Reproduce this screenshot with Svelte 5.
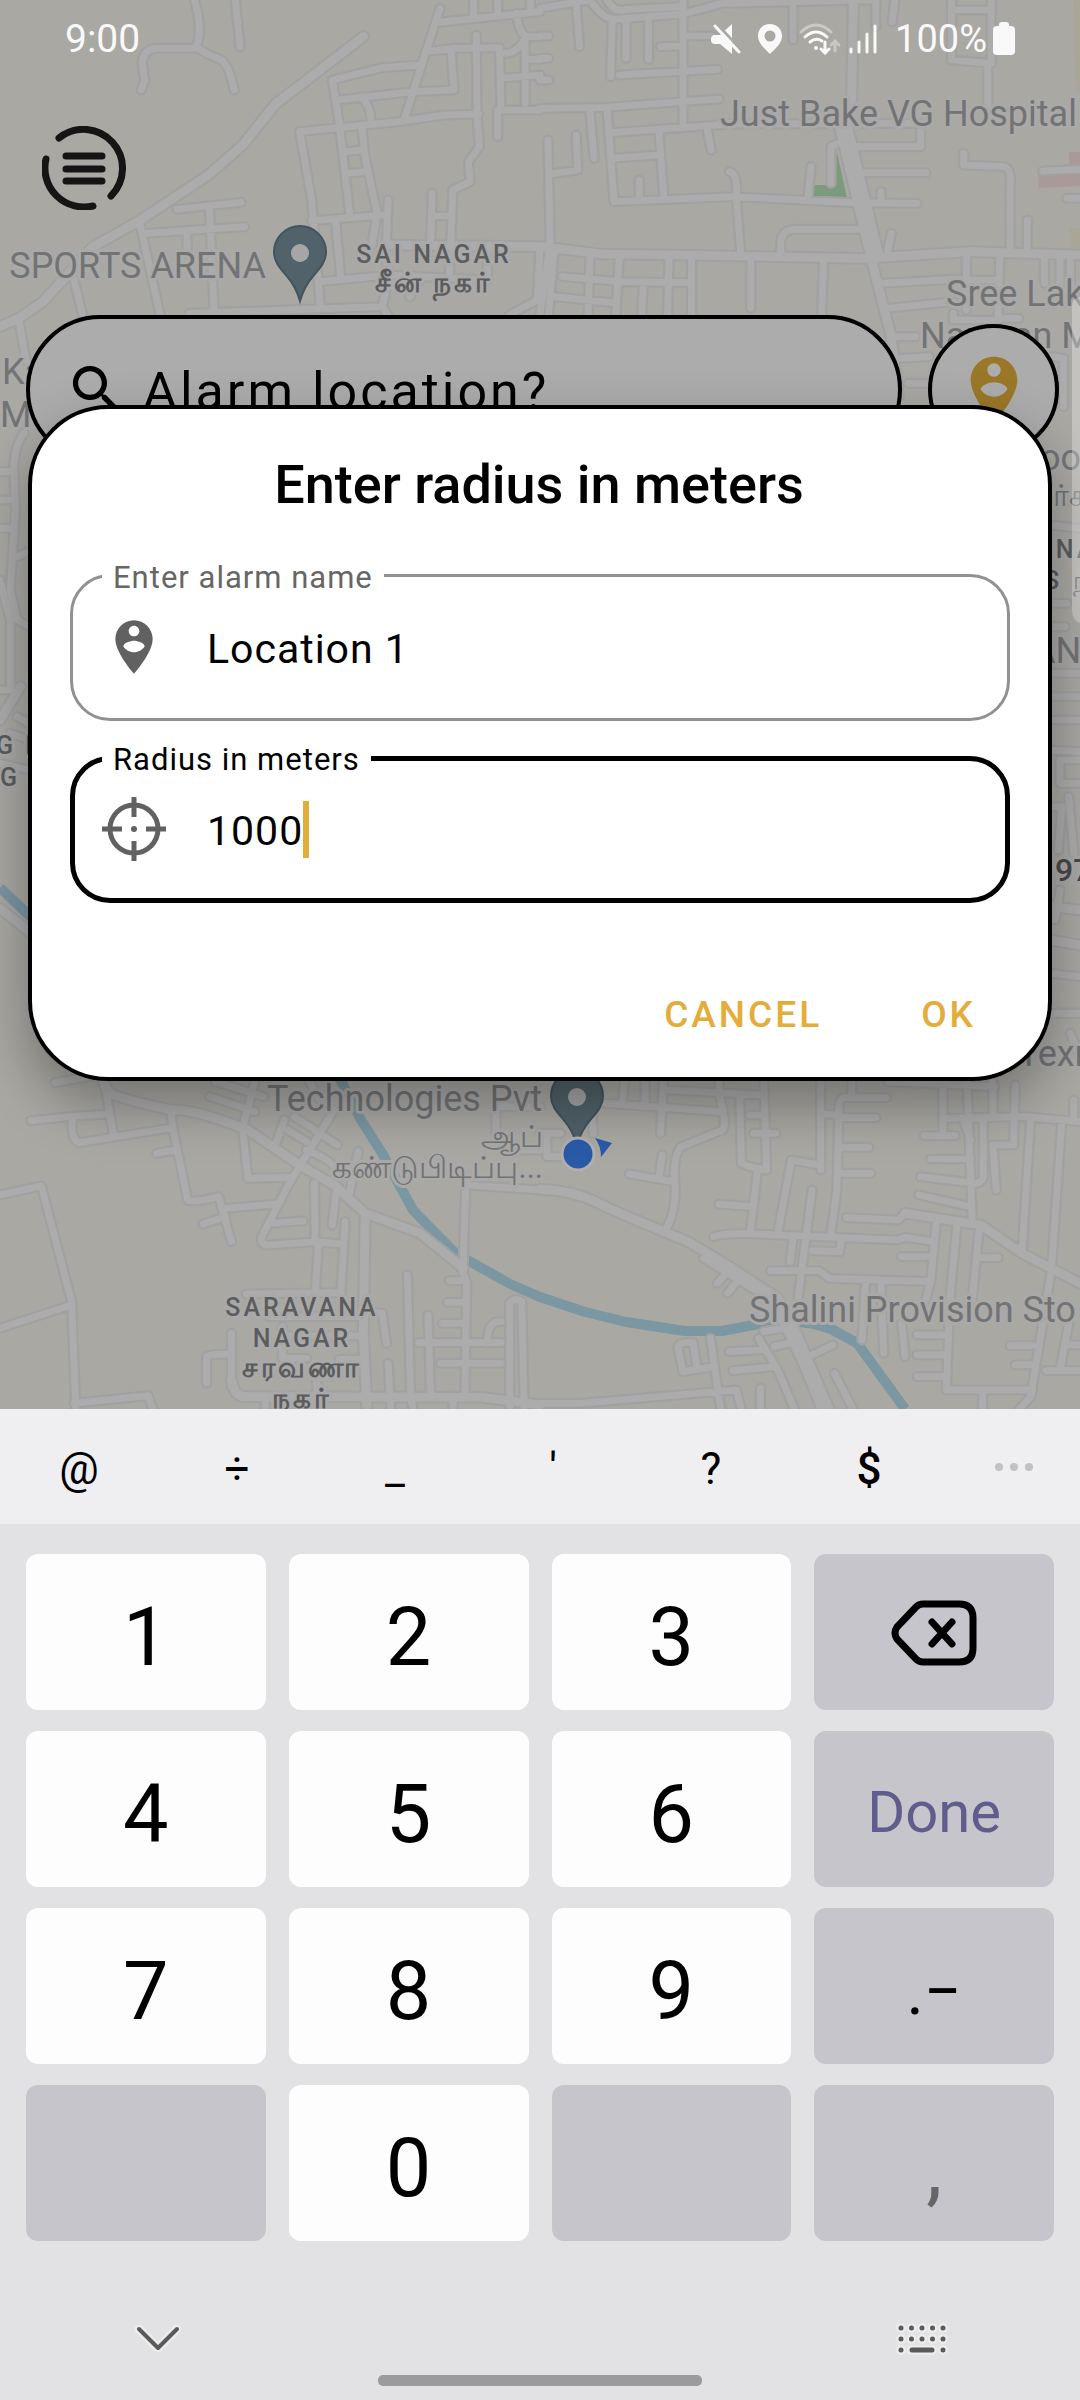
<script lang="ts">
  type Tile = { at: string; main: string; lanes: string };

  // Street geometry, one tile per quadrant of the visible map.
  const tiles: Tile[] = [
    {
      at: 'translate(0 0) scale(.3444 .3333)',
      main: 'M1055 110L800 312 705 435 605 525 405 662 270 740 125 905 55 955 0 980M1122 735L1568 740',
      lanes:
        'M565 0Q590 90 570 140Q590 160 640 178Q665 195 680 270M570 145H450Q415 150 413 190L420 240 410 270M683 0L697 140M55 960L75 1080M405 665L465 945M215 840L240 945M425 700L710 680M515 628L700 607M608 620L622 945M543 700V760M1278 25L1235 160 1175 355M1265 68L1568 35M1375 0V55M1445 0V40M1540 0V30M1235 155L1320 145 1450 143 1455 330H1568M1310 150L1318 270 1200 275 980 300M1220 195L1110 203 965 240 985 370 1015 640M1047 290Q1080 320 1077 370M870 395L1160 365 1290 345 1390 342M870 395L905 600 930 920M1383 105L1385 345 1392 440 1360 485 1365 545 1315 570 1305 830M1050 375L1060 470 1095 640 1080 735M1005 455L1050 450M1010 520L1060 515M905 662L1120 645M1127 600L1122 735M1255 580L1250 735M1255 648H1310M1500 40Q1505 90 1525 110H1568M1525 110V310M1525 115Q1500 165 1455 160M1455 235L1568 225M1525 178H1568M1445 330V410M975 665L990 840M930 845L1130 825 1415 840M1115 750L1130 830 1110 920M550 940L1110 920 1125 945M1415 750V830M1568 740L1560 900 1480 945M1190 890L1220 840'
    },
    {
      at: 'translate(540 0) scale(.3444 .3333)',
      main: 'M0 740L180 762 400 765 940 775 1250 755 1568 765M910 0L905 300 870 380 960 770 1020 1010 1040 1190M895 390L985 770',
      lanes:
        'M0 25L145 0Q180 55 215 58L415 42 530 10 960 0M195 0Q215 40 250 28L410 20M105 10L115 140M210 60L205 230M250 65V175M315 65V178M230 225L515 208M415 0V380M415 108H500M350 140L410 138M0 325L190 322 520 297M0 108H25M0 175H25M0 240H25M735 10V120M975 0V80M1030 0L1023 65M195 330L215 605 560 590 905 608 1095 610M145 335L157 475M210 398L555 372 1100 370M345 390L360 600M205 475L345 465M485 385L497 450M288 540V595M23 420L30 740M105 405L110 510 30 522M550 515Q575 520 570 590L582 750M787 500L778 595M845 550V440L880 425M900 440H1105V395M915 518H1120M990 575V610M1230 460V495L1350 500Q1370 510 1365 560V750M1020 700L1010 750M700 755Q690 690 740 688H940M1415 660V750M1195 0V180L1310 190V0M1195 30H1310M1300 190V320M25 760L0 945M40 760L25 945M145 770L140 945M230 775L220 945M375 780L370 945M440 780V945M65 830L230 845 440 848M40 890L210 908M300 855L295 945M612 785V925M823 785L818 940M990 850L1200 838 1330 840M1010 925L1200 905M1238 770V930M1335 770L1330 955H1390M1200 940V960H1330M1465 770V850M1510 770V870M1540 770V860M1050 1075L1130 1070M1070 1150H1130M1030 1010H1090M1460 513L1568 508M1530 595H1568M1490 1070L1520 1075 1520 1220'
    },
    {
      at: 'translate(0 400) scale(.3444 .3333)',
      main: 'M0 960L60 860M0 1525L90 1600',
      lanes:
        'M70 100Q45 130 40 200L45 330 30 570 50 660M0 215H25M0 300H25M0 385H25M50 470L85 455M50 660L85 680M0 540L30 660V870M0 870H30M50 950L85 970M30 1000L85 1020M0 1090L85 1110'
    },
    {
      at: 'translate(540 400) scale(.3444 .3333)',
      main: 'M1480 1520L1568 1530M1480 1620L1568 1635',
      lanes:
        'M1480 375L1568 385M1480 610H1530M1480 680H1525M1480 820H1568M1480 890H1568M1480 960H1568M1480 1050L1568 1055M1568 1080H1510V1150H1568M1480 1220H1515L1505 1350M1535 1190L1550 1360M1510 1470L1495 1560M1480 1720L1568 1730M1480 1840H1568'
    },
    {
      at: 'translate(0 900) scale(.3444 .3333)',
      main: 'M300 530Q300 570 330 585Q400 610 500 630Q560 625 720 690L870 795 970 855 1060 940 1220 1000 1345 1105M672 1440Q680 1490 710 1490L1400 1492 1568 1515M1060 950L1055 1300 1065 1520',
      lanes:
        'M160 548L310 520M1340 1105L1355 1150 1350 1480M305 560L330 705M90 662L220 648 320 642M210 660Q205 720 230 728L490 685M495 635L505 700 545 900Q550 910 635 890L672 1025M455 760L510 750M660 925L800 912M590 972L655 950M705 690L720 835 850 832M705 680L740 545M610 590L740 635M625 545L765 590M825 660L800 735M970 630L840 850 760 1010Q755 1035 780 1035L920 1025 990 1032M835 690L890 725M855 650L980 735M785 970L880 963M890 750Q960 780 970 800M1040 755L1015 880M913 850L915 1025M975 880L965 975M1002 965L990 1180M925 1030L915 1180M715 1182L990 1178M1353 840L1345 1090M1355 855L1568 870M1183 1125L1192 1480M1305 1142H1350M1300 1207H1350M1285 1270H1350M1215 1328H1455M1243 1245L1250 1480M1455 1265Q1415 1260 1415 1330M1280 1390H1455M1480 1520V1210Q1495 1190 1515 1205L1522 1520M672 1300V1460M600 1450V1370Q605 1362 670 1362M1060 1235L1110 1240 1122 1330M780 1250H1060M820 1280V1375H890M830 1308H1050M985 1378H1060M1127 1390L1135 1530M0 885L120 858 208 1205 220 1530M0 1285L208 1215M215 1510L430 1487 445 1530M1190 1480L1200 1530M1315 1490V1530M920 1430V1490M770 1490V1530M1440 700V620H1568M900 545Q920 590 930 600M1460 750H1568'
    },
    {
      at: 'translate(540 900) scale(.3444 .3333)',
      main: 'M0 868Q90 870 160 905Q230 940 290 965L430 1025 550 1100 690 1195M690 1195L740 1290 840 1530M1060 940L1280 975 1400 1060 1568 1150M700 1250L765 1390 820 1530',
      lanes:
        'M370 980Q400 920 390 830Q390 760 410 740L530 690Q545 680 520 580V545M190 610L530 635M358 545L350 700M260 822L385 845M355 765L345 835M245 545L240 605M305 545V615M370 570L650 585M650 545L658 810Q600 800 585 790L580 590M610 645H650M620 700H685M632 810L610 1000M520 913L620 920M815 545V810M690 1000L730 780 810 795M790 870L750 1190M1005 593H880Q865 600 868 640L862 870 845 1000M825 642L870 645M870 653H975M870 742H955M870 820H960M905 545V590M505 1010Q550 995 690 1005L1040 1020 1060 1012 1140 1025M890 953L1040 960 1060 940M670 1112H810L840 1135 1135 1145M735 1010L727 1085M790 1052L870 1055 875 1020M1150 970L1135 1140 1120 1200M1210 980L1190 1200 1180 1470H1430M1275 990L1255 1200M1280 1073H1330M1050 1070H1130M1240 545L1255 960M1010 545L1320 560M1170 560V700M1115 707H1205M1170 655L1410 650 1568 665M1230 660L1250 720M1135 777H1250M1105 830L1260 850Q1290 850 1287 820V655M1100 885L1250 920M1380 555L1375 735H1315L1325 870M1315 545V650M1425 655L1400 1050M1515 665L1485 1110 1425 1490 1390 1530M1550 600V650M1535 1270L1510 1410M1470 1412H1568M1365 1337H1430M1380 1395H1430M1535 1335H1568M1095 1305H1170M1095 1365H1170M1095 1430H1170M1285 1475V1530M945 1145L935 1320M990 1155L998 1360M1050 1270L1060 1370M550 1355L640 1350M560 1412L680 1400M635 1315L690 1410 740 1530M495 1315L525 1530M505 1400L415 1415 400 1340Q405 1325 445 1328L455 1400M650 1295L730 1280M680 1340L745 1325M850 1335L790 1365M855 1420L910 1530M640 1465V1530M0 1510H120L570 1470 585 1530M475 1075L640 1180M545 1115L515 1150M575 1140L545 1180M20 700V770H60M150 640L155 700M1540 400L1568 470M1480 340H1568M0 700H60'
    }
  ];

  const symbols = ['@', '÷', '_', "'", '?', '$'];

  const keys = [
    { label: '1' }, { label: '2' }, { label: '3' }, { label: 'Backspace', kind: 'erase' },
    { label: '4' }, { label: '5' }, { label: '6' }, { label: 'Done', kind: 'done' },
    { label: '7' }, { label: '8' }, { label: '9' }, { label: '.−', kind: 'marks' },
    { label: '', kind: 'blank' }, { label: '0' }, { label: '', kind: 'blank' }, { label: ',', kind: 'comma' }
  ];

  const personPin =
    'M12 2C8.14 2 5 5.14 5 9c0 5.25 7 13 7 13s7-7.75 7-13c0-3.86-3.14-7-7-7zm0 2c1.1 0 2 .9 2 2s-.9 2-2 2-2-.9-2-2 .9-2 2-2zm0 10c-1.67 0-3.14-.85-4-2.15.02-1.32 2.67-2.15 4-2.15s3.98.83 4 2.15C15.14 13.15 13.67 14 12 14z';

  let alarmName = $state('Location 1');
  let radius = $state('1000');
</script>

<div class="screen">
  <main class="stage">
    <svg class="map" viewBox="0 0 1080 1409" preserveAspectRatio="xMidYMin slice" aria-hidden="true">
      <path class="park" d="M814 197V185H828L837 152 847 198Z" />
      <path class="clinic" d="M1038 172L1080 166V186L1039 188ZM1069 152H1080V166H1069Z" />
      <path class="yard" d="M1073 0H1080V90H1076ZM1070 228H1080V248H1070Z" />
      <g class="water">
        <path d="M0 888L32 918M338 1075L361 1120 382 1153 413 1210 455 1253 510 1284 540 1297 585 1312 626 1322 685 1331 722 1331 764 1323Q805 1318 833 1330L857 1343 905 1409" />
      </g>
      {#each tiles as tile}
        <g transform={tile.at}>
          <path class="main casing" d={tile.main} />
          <path class="lane casing" d={tile.lanes} />
        </g>
      {/each}
      {#each tiles as tile}
        <g transform={tile.at}>
          <path class="main" d={tile.main} />
          <path class="lane" d={tile.lanes} />
        </g>
      {/each}

      <g class="place">
        <text x="720" y="126">Just Bake VG Hospital</text>
        <text x="266" y="278" text-anchor="end">R SPORTS ARENA</text>
        <text x="946" y="306">Sree Lak</text>
        <text x="920" y="348">Narayan M</text>
        <text x="2" y="384">Ka</text>
        <text x="0" y="427">Ma</text>
        <text x="1040" y="470">oor</text>
        <text x="1053" y="506" class="tamil">ர்க</text>
        <text x="1032" y="663">ANT</text>
        <text x="1018" y="1066">Texm</text>
        <text x="267" y="1111">Technologies Pvt</text>
        <text x="543" y="1147" text-anchor="end" class="tamil">ஆப்</text>
        <text x="543" y="1178" text-anchor="end" class="tamil">கண்டுபிடிப்பு...</text>
        <text x="749" y="1322">Shalini Provision Sto</text>
      </g>
      <g class="area">
        <text x="434" y="263">SAI NAGAR</text>
        <text x="434" y="292" class="tamil">சீன் நகர்</text>
        <text x="20" y="754">G R</text>
        <text x="10" y="786">G</text>
        <text x="1076" y="558">NA</text>
        <text x="1053" y="589">S</text>
        <text x="1082" y="589">ந</text>
        <text x="302" y="1316">SARAVANA</text>
        <text x="302" y="1347">NAGAR</text>
        <text x="302" y="1377" class="tamil">சரவணா</text>
        <text x="302" y="1408" class="tamil">நகர்</text>
      </g>
      <text class="route" x="1055" y="881">97</text>

      <path class="marker" d="M300 301C297 290 293 283 286 275 279 267 274 261 274 252A26 26 0 0 1 326 252C326 261 321 267 314 275 307 283 303 290 300 301Z" />
      <circle class="hole" cx="300" cy="253" r="9" />
      <path class="marker" d="M577 1145C574 1134 570 1127 563 1119 556 1111 551 1105 551 1096A26 26 0 0 1 603 1096C603 1105 598 1111 591 1119 584 1127 580 1134 577 1145Z" />
      <circle class="hole" cx="577" cy="1097" r="9" />
      <path class="heading" d="M595 1138L612 1143 601 1157Q601 1146 595 1138Z" />
      <circle class="here" cx="578" cy="1154" r="16" />
      <path class="edge" d="M1080 297Q1072 298 1072 306V610Q1072 620 1080 623Z" />
    </svg>

    <header class="top">
      <div class="status">
        <time>9:00</time>
        <div class="signals">
          <svg width="30" height="32" viewBox="0 0 30 32" fill="#f9f9f9" aria-hidden="true">
            <path d="M0 16Q0 12 4 12H9L21 1V31L9 21H4Q0 21 0 17Z" />
            <path d="M5 0L31 28" stroke="#a9a8a4" stroke-width="3" />
            <path d="M4 3L28 29" stroke="#f9f9f9" stroke-width="3" stroke-linecap="round" />
          </svg>
          <svg width="26" height="32" viewBox="0 0 26 32" fill="#f9f9f9" fill-rule="evenodd" aria-hidden="true">
            <path d="M13 1C6 1 1 6 1 13 1 20 7 25 13 31 19 25 25 20 25 13 25 6 20 1 13 1ZM13 7.500A5.500 5.500 0 1 1 13 18.500 5.500 5.500 0 1 1 13 7.500Z" />
          </svg>
          <svg width="80" height="32" viewBox="0 0 80 32" fill="none" stroke="#f9f9f9" stroke-width="3" stroke-linecap="round" aria-hidden="true">
            <path d="M2 9Q17-5 32 9" stroke="#c8c8c7" />
            <path d="M6 14Q17 4 28 14M11 19Q17 14 23 18" />
            <circle cx="17" cy="25" r="2" fill="#f9f9f9" stroke="none" />
            <path d="M26 19V29M22 26L26 30 30 26" stroke-width="3" />
            <path d="M36 28V19M32 22L36 18 40 22" stroke="#c8c8c7" stroke-width="3" />
            <path d="M52 26V29M60 19V29M68 11V29M76 3V29" />
          </svg>
          <span class="percent">100%</span>
          <svg width="22" height="34" viewBox="0 0 22 34" fill="#f9f9f9" aria-hidden="true">
            <path d="M6 4V3Q6 0 9 0H13Q16 0 16 3V4H18Q22 4 22 8V29Q22 33 18 33H4Q0 33 0 29V8Q0 4 4 4Z" />
          </svg>
        </div>
      </div>

      <button class="menu" aria-label="Menu">
        <svg viewBox="-42 -42 84 84" fill="none" stroke="#151515" stroke-width="7" stroke-linecap="round">
          <path d="M-25-30A39 39 0 0 1 27 28M9 38A39 39 0 0 1-38-9M-18-12H18M-18 1H18M-18 13H18" />
        </svg>
      </button>

      <div class="find">
        <label class="search">
          <svg viewBox="0 0 24 24" aria-hidden="true">
            <path d="M15.500 14h-.79l-.28-.27A6.470 6.470 0 0 0 16 9.500 6.500 6.500 0 1 0 9.500 16c1.610 0 3.090-.59 4.230-1.570l.27.28v.79l5 4.990L20.490 19l-4.990-5zm-6 0C7.010 14 5 11.990 5 9.500S7.010 5 9.500 5 14 7.010 14 9.500 11.990 14 9.500 14z" />
          </svg>
          <input type="text" placeholder="Alarm location?" aria-label="Alarm location" />
        </label>
        <button class="locate" aria-label="My location">
          <svg viewBox="0 0 24 24" aria-hidden="true"><path d={personPin} /></svg>
        </button>
      </div>
    </header>

    <div class="overlay">
      <form class="dialog" role="dialog" aria-labelledby="dialog-title" onsubmit={(e) => e.preventDefault()}>
        <h1 id="dialog-title">Enter radius in meters</h1>
        <div class="fields">
          <div class="field">
            <label for="alarm-name">Enter alarm name</label>
            <svg viewBox="0 0 24 24" aria-hidden="true"><path d={personPin} /></svg>
            <input id="alarm-name" type="text" bind:value={alarmName} />
          </div>
          <div class="field active">
            <label for="radius">Radius in meters</label>
            <svg viewBox="-32 -32 64 64" aria-hidden="true">
              <circle r="24" fill="none" stroke="#616161" stroke-width="5" />
              <path d="M-32 0H-12M12 0H32M0-32V-12M0 12V32" stroke="#616161" stroke-width="5" />
              <circle r="3" />
            </svg>
            <input id="radius" type="text" inputmode="numeric" bind:value={radius} />
            <span class="caret"></span>
          </div>
        </div>
        <div class="actions">
          <button type="button">CANCEL</button>
          <button type="submit">OK</button>
        </div>
      </form>
    </div>
  </main>

  <section class="keyboard" aria-label="Keyboard">
    <div class="symbols">
      {#each symbols as symbol}
        <button class={['symbol', symbol === '$' && 'strong']}>{symbol}</button>
      {/each}
      <button class="more" aria-label="More symbols"><i></i><i></i><i></i></button>
    </div>
    <div class="keys">
      {#each keys as key}
        <button class={['key', key.kind]} aria-label={key.label || 'Blank'}>
          {#if key.kind === 'erase'}
            <svg width="86" height="66" viewBox="0 0 86 66" fill="none" stroke="#000" stroke-width="7" stroke-linecap="round" aria-hidden="true">
              <path d="M32 4H68Q82 4 82 18V48Q82 62 68 62H32Q28 62 25 59L6 39Q2 33 6 27L25 7Q28 4 32 4ZM41 22L61 44M61 22L41 44" />
            </svg>
          {:else}
            {key.label}
          {/if}
        </button>
      {/each}
    </div>
    <nav class="nav">
      <div class="navrow">
        <button aria-label="Hide keyboard">
          <svg width="52" height="32" viewBox="0 0 52 32" fill="none" stroke-linecap="round" stroke-linejoin="round">
            <path d="M7 6L26 25 45 6" stroke="#ececec" stroke-width="9" />
            <path d="M7 6L26 25 45 6" stroke="#5a5a5a" stroke-width="4" />
          </svg>
        </button>
        <button aria-label="Switch keyboard">
          <svg width="52" height="32" viewBox="0 0 52 32" fill="none" stroke-linecap="round">
            <path stroke="#ececec" stroke-width="10" d="M5 5h0M15.500 5h0M26 5h0M36.500 5h0M47 5h0M5 16h0M15.500 16h0M26 16h0M36.500 16h0M47 16h0M5 27h0M16 27H36M47 27h0" />
            <path stroke="#5a5a5a" stroke-width="5" d="M5 5h0M15.500 5h0M26 5h0M36.500 5h0M47 5h0M5 16h0M15.500 16h0M26 16h0M36.500 16h0M47 16h0M5 27h0M16 27H36M47 27h0" />
          </svg>
        </button>
      </div>
      <div class="home"></div>
    </nav>
  </section>
</div>

<style>
  :global(body) {
    margin: 0;
    background: #e2e2e4;
  }
  * {
    box-sizing: border-box;
  }
  .screen {
    display: flex;
    flex-direction: column;
    min-height: 100vh;
    font-family: Roboto, 'Liberation Sans', sans-serif;
    color: #000;
  }
  button,
  input {
    font: inherit;
    color: inherit;
    border: 0;
    padding: 0;
    background: none;
  }
  svg {
    display: block;
    flex: none;
  }

  .stage {
    position: relative;
    flex: 1;
    overflow: hidden;
    background: #a9a8a3;
  }
  .map {
    position: absolute;
    inset: 0;
    width: 100%;
    height: 100%;
  }
  .park { fill: #7c9a7c; }
  .clinic { fill: #a99a99; }
  .yard { fill: #a9a697; }
  .water path {
    fill: none;
    stroke: #7a97a2;
    stroke-width: 10;
    stroke-linejoin: round;
  }
  .lane,
  .main {
    fill: none;
    stroke: #acacad;
    stroke-linecap: round;
    stroke-linejoin: round;
    stroke-width: 20;
  }
  .main { stroke-width: 26; }
  .lane.casing,
  .main.casing {
    stroke: #a1a1a1;
    stroke-width: 33;
  }
  .main.casing { stroke-width: 38; }
  .place text,
  .area text,
  .route {
    paint-order: stroke;
    stroke: #a9a9a9;
    stroke-width: 6;
    stroke-linejoin: round;
  }
  .place {
    font-size: 36px;
    fill: #737373;
  }
  .place .tamil { font-size: 31px; }
  .area {
    font-size: 25px;
    font-weight: 500;
    letter-spacing: 3px;
    text-anchor: middle;
    fill: #5c5c5c;
  }
  .area .tamil {
    font-size: 28px;
    font-weight: 600;
  }
  .route {
    font-size: 32px;
    font-weight: 500;
    fill: #484848;
  }
  .marker {
    fill: #51626a;
    stroke: #43545c;
    stroke-width: 2;
  }
  .hole { fill: #a6a6a6; }
  .heading { fill: #2a5aa8; }
  .here {
    fill: #2a5aa8;
    stroke: #b0b0b0;
    stroke-width: 3;
  }
  .edge { fill: rgba(255, 255, 255, 0.3); }

  .top { position: relative; }
  .status {
    display: flex;
    justify-content: space-between;
    align-items: center;
    height: 78px;
    padding: 0 65px;
    font-size: 39px;
  	color: #f9f9f9;
  }
  .signals {
    display: flex;
    align-items: center;
    gap: 16px;
  }
  .percent {
    margin-right: -10px;
    font-size: 38px;
  }
  .menu {
    display: block;
    width: 84px;
    height: 84px;
    margin: 48px 0 0 42px;
  }
  .find {
    display: flex;
    align-items: center;
    gap: 26px;
    margin-top: 105px;
    padding: 0 21px 0 26px;
  }
  .search {
    flex: 1;
    display: flex;
    align-items: center;
    gap: 15px;
    height: 149px;
    padding: 0 35px;
    border: 4px solid #000;
    border-radius: 75px;
    background: #acacac;
  }
  .search svg {
    width: 63px;
    height: 63px;
  }
  .search input {
    flex: 1;
    min-width: 0;
    padding-top: 4px;
    outline: 0;
    font-size: 52px;
    letter-spacing: 3px;
  }
  .search input::placeholder {
    color: #000;
    opacity: 1;
  }
  .locate {
    display: grid;
    place-items: center;
    width: 131px;
    height: 131px;
    border: 4px solid #000;
    border-radius: 50%;
    background: #acacac;
  }
  .locate svg {
    width: 80px;
    height: 80px;
    fill: #9a7828;
  }

  .overlay {
    position: absolute;
    inset: 0;
    display: flex;
    align-items: center;
    padding: 76px 28px 0;
  }
  .dialog {
    flex: 1;
    padding: 44px 40px 15px 38px;
    border: 4px solid #000;
    border-radius: 80px;
    background: #fff;
    box-shadow: 0 24px 56px rgba(0, 0, 0, 0.32);
  }
  h1 {
    margin: 0;
    font-size: 54px;
    line-height: 64px;
    font-weight: 500;
    text-align: center;
  }
  .fields {
    display: grid;
    gap: 35px;
    margin: 57px -2px 0 0;
  }
  .field {
    position: relative;
    display: flex;
    align-items: center;
    height: 147px;
    padding: 0 29px;
    border: 3px solid #919191;
    border-radius: 40px;
  }
  .field.active {
    padding: 0 27px;
    border: 5px solid #000;
  }
  .field label {
    position: absolute;
    top: -18px;
    left: 29px;
    padding: 0 11px;
    background: #fff;
    font-size: 31px;
    line-height: 38px;
    letter-spacing: 1px;
    color: #666;
  }
  .field.active label {
    top: -20px;
    left: 27px;
    color: #000;
  }
  .field svg {
    width: 64px;
    height: 64px;
    margin-right: 41px;
    fill: #616161;
  }
  .field input {
    flex: 1;
    min-width: 0;
    padding-top: 4px;
    outline: 0;
    font-size: 41px;
    letter-spacing: 1px;
  }
  .field.active input {
    flex: none;
    field-sizing: content;
  }
  .caret {
    width: 6px;
    height: 57px;
    background: #e2ad3b;
  }
  .actions {
    display: flex;
    justify-content: flex-end;
    gap: 35px;
    margin-top: 64px;
  }
  .actions button {
    height: 95px;
    padding: 0 32px;
    font-size: 37px;
    font-weight: 500;
    letter-spacing: 3px;
    color: #e2ad3b;
  }

  .symbols {
    display: flex;
    height: 115px;
    background: #efeff1;
  }
  .symbol {
    flex: 158;
    padding-top: 4px;
    font-size: 44px;
  }
  .strong { font-weight: 500; }
  .more {
    flex: 132;
    display: flex;
    justify-content: center;
    align-items: center;
    gap: 7px;
  }
  .more i {
    width: 8px;
    height: 8px;
    border-radius: 50%;
    background: #c2c2c4;
  }
  .keys {
    display: grid;
    grid-template-columns: repeat(4, 1fr);
    grid-auto-rows: 156px;
    gap: 21px 23px;
    padding: 30px 26px 0;
  }
  .key {
    display: grid;
    place-items: center;
    padding-top: 11px;
    border-radius: 12px;
    background: #fdfdfd;
    font-size: 81px;
    line-height: 96px;
  }
  .erase,
  .done,
  .marks,
  .blank,
  .comma {
    background: #c6c5cc;
  }
  .erase { padding-top: 2px; }
  .done {
    padding-top: 6px;
    font-size: 58px;
    color: #605c8b;
  }
  .marks { font-size: 66px; }
  .comma { color: #666; }
  .nav { padding: 82px 0 14px; }
  .navrow {
    display: flex;
    justify-content: space-between;
    padding: 0 132px;
  }
  .home {
    width: 30%;
    height: 11px;
    margin: 20px auto 0;
    border-radius: 5px;
    background: #9b9b9d;
  }
</style>
